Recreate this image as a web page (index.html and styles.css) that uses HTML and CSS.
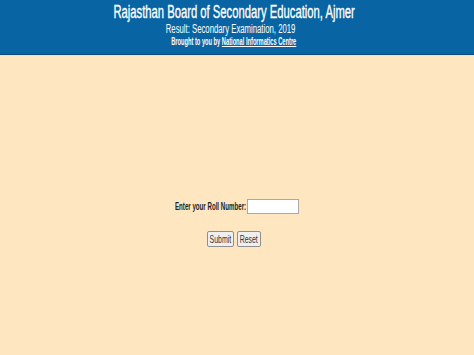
FILE: index.html
```html
<!DOCTYPE html>
<html>
<head>
<meta charset="utf-8">
<link rel="stylesheet" href="styles.css">
</head>
<body>
<div class="header">
  <div class="title"><span class="sq">Rajasthan Board of Secondary Education, Ajmer</span></div>
  <div class="subtitle"><span class="sq">Result: Secondary Examination, 2019</span></div>
  <div class="credit"><span class="sq">Brought to you by <a href="#">National Informatics Centre</a></span></div>
</div>
<div class="rule"></div>
<div class="main">
  <form class="form">
    <div class="row">
      <label class="label"><span class="lsq">Enter your Roll Number:</span></label>
      <input class="roll" type="text">
    </div>
    <div class="buttons">
      <button type="button" class="btn"><span class="sq">Submit</span></button>
      <button type="reset" class="btn"><span class="sq">Reset</span></button>
    </div>
  </form>
</div>
</body>
</html>
```

FILE: styles.css
```css
html, body {
  margin: 0;
  padding: 0;
  background: #fee6c0;
  font-family: "Liberation Sans", Arial, sans-serif;
  height: 100%;
}
.header {
  background: #0864a3;
  height: 55px;
  box-sizing: border-box;
  padding-top: 1px;
  padding-right: 6px;
  color: #ffffff;
  text-align: center;
  border-bottom: 1px solid #0a4b7c;
}
.rule {
  height: 1px;
  background: #dfe8d2;
}
.sq {
  display: inline-block;
  transform: scaleX(0.66);
  transform-origin: center;
  white-space: nowrap;
}
.title {
  font-size: 18px;
  line-height: 22px;
}
.title .sq {
  transform: scaleX(0.625);
  -webkit-text-stroke: 0.35px #ffffff;
}
.subtitle {
  font-size: 12.5px;
  line-height: 13px;
  padding-right: 7px;
}
.subtitle .sq {
  transform: scaleX(0.62);
}
.credit {
  font-size: 10px;
  font-weight: bold;
  line-height: 12px;
}
.credit .sq {
  transform: scaleX(0.57);
}
.credit a {
  color: #ffffff;
  text-decoration: underline;
}
.main {
  display: flex;
  justify-content: center;
  padding-top: 143px;
}
.form {
  display: flex;
  flex-direction: column;
  align-items: center;
}
.row {
  display: flex;
  align-items: center;
  gap: 1px;
  margin-left: -1px;
}
.label {
  font-size: 10px;
  font-weight: bold;
  color: #222;
  width: 71px;
  display: block;
  white-space: nowrap;
}
.lsq {
  display: inline-block;
  transform: scaleX(0.615);
  transform-origin: left center;
}
.roll {
  width: 52px;
  height: 15px;
  box-sizing: border-box;
  border: 1px solid #a9a9a9;
  background: #fff;
  padding: 0;
}
.buttons {
  display: flex;
  gap: 3px;
  margin-top: 17px;
  margin-left: -6px;
}
.btn {
  height: 16px;
  box-sizing: border-box;
  padding: 0;
  font-family: "Liberation Sans", Arial, sans-serif;
  font-size: 10.5px;
  color: #333;
  background: #efefef;
  border: 1px solid #8f8f8f;
  border-radius: 2px;
  display: flex;
  align-items: center;
  justify-content: center;
}
.btn:first-child { width: 27px; }
.btn:last-child { width: 24px; }
```
